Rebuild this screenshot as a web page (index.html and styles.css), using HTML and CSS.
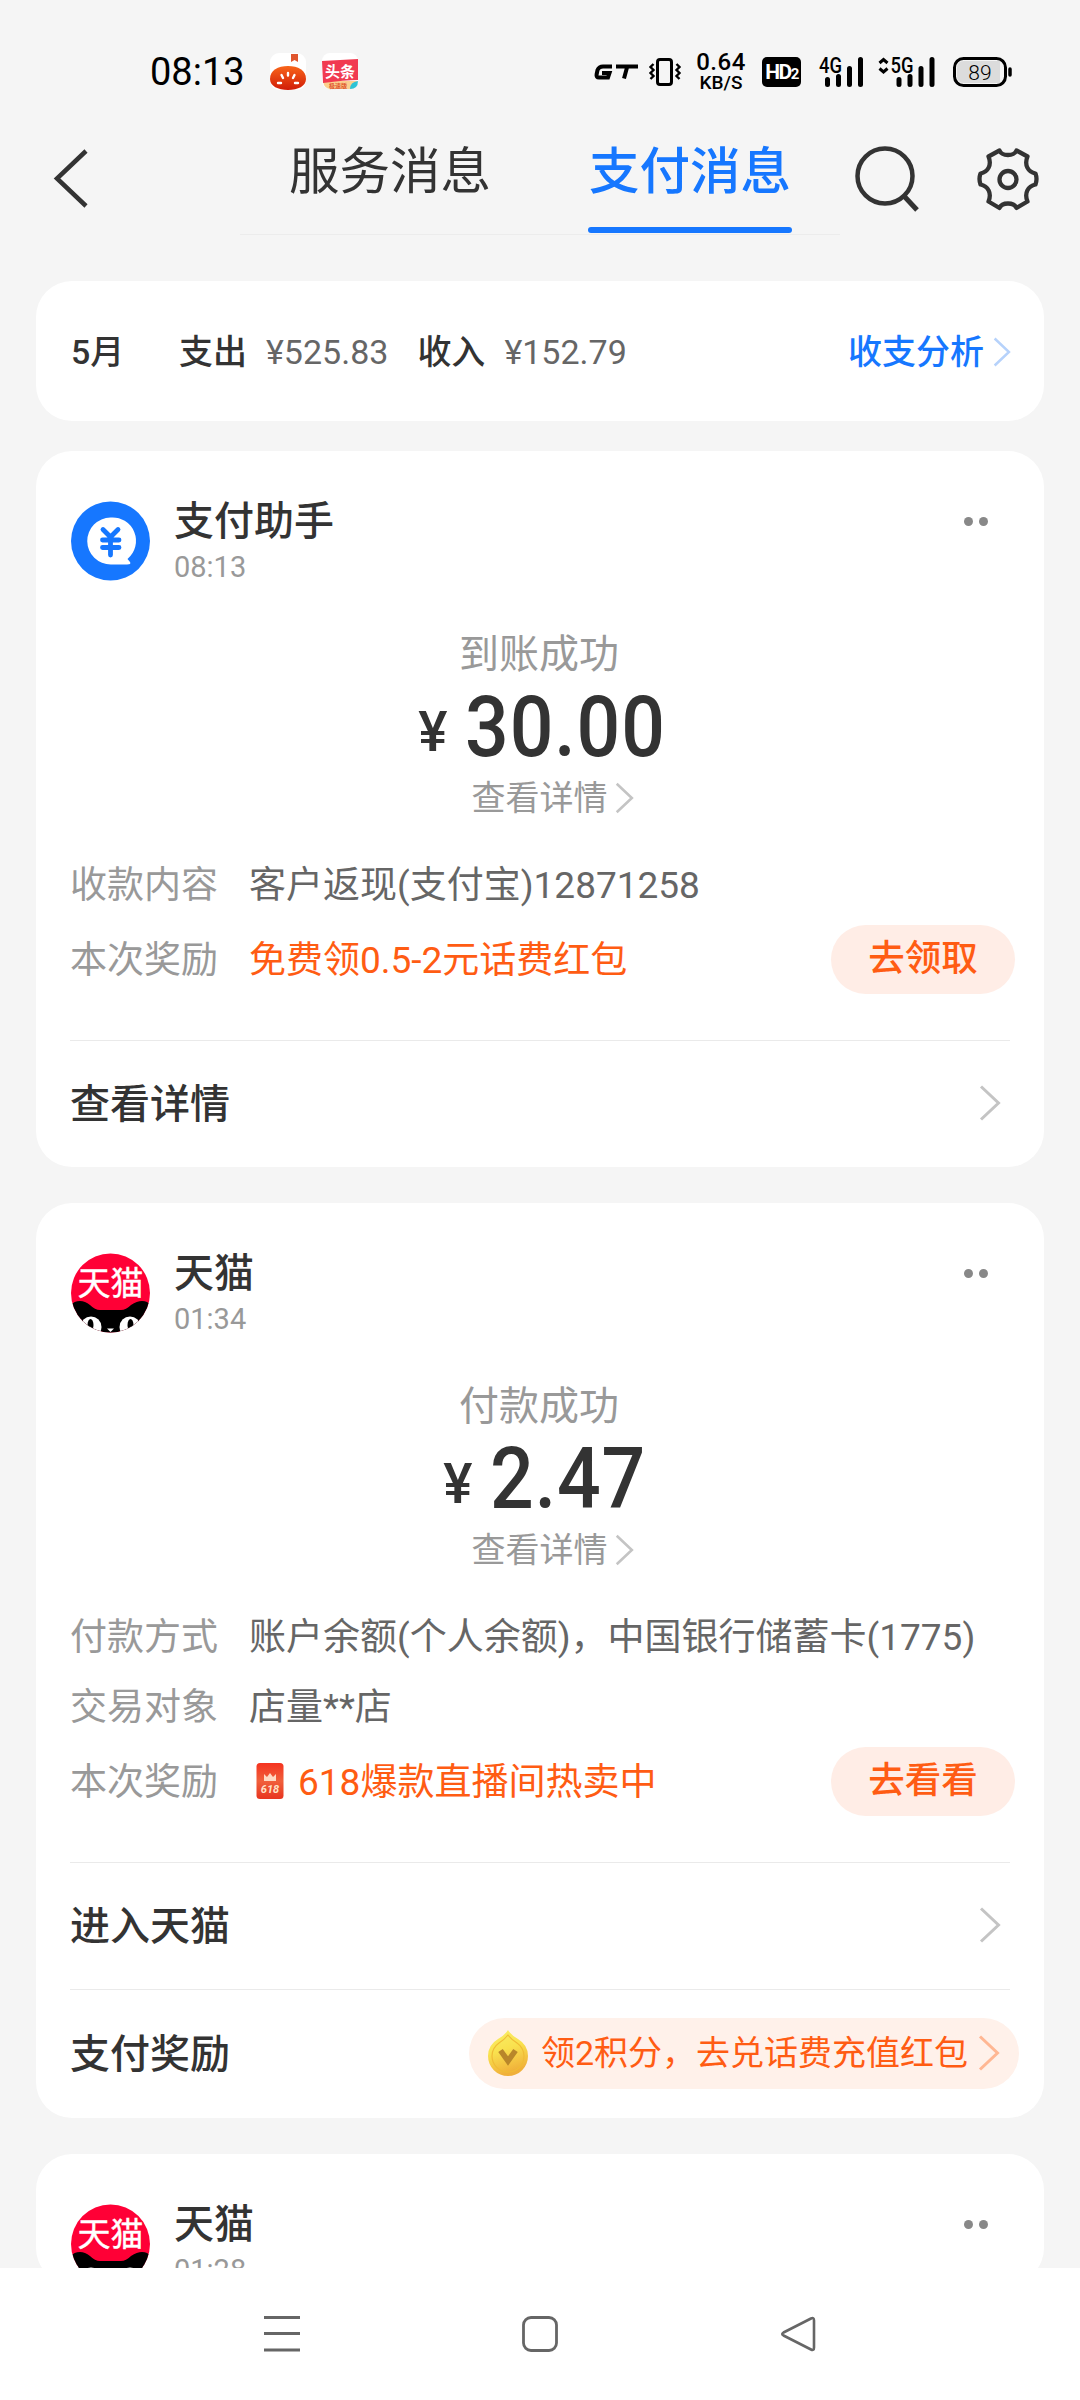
FILE: index.html
```html
<!DOCTYPE html>
<html lang="zh-CN">
<head>
<meta charset="utf-8">
<title>支付消息</title>
<link rel="stylesheet" href="styles.css">
</head>
<body>
<svg width="0" height="0" class="defs">
  <defs>
    <linearGradient id="tomato" x1="0" y1="0" x2="0" y2="1"><stop offset="0" stop-color="#f8651a"/><stop offset="1" stop-color="#d11c08"/></linearGradient>
    <linearGradient id="gold" x1="0" y1="0" x2="0.3" y2="1"><stop offset="0" stop-color="#f9f06a"/><stop offset="0.5" stop-color="#f9e14e"/><stop offset="1" stop-color="#f0b03a"/></linearGradient>
    <linearGradient id="packet" x1="0" y1="0" x2="0" y2="1"><stop offset="0" stop-color="#f5331f"/><stop offset="0.5" stop-color="#f0603c"/><stop offset="1" stop-color="#e8351f"/></linearGradient>
    <clipPath id="round"><circle cx="39.5" cy="40" r="39.5"/></clipPath>
    <symbol id="chevron" viewBox="0 0 22 36"><path d="M2 1.5 19.5 18 2 34.5" fill="none" stroke="currentColor" stroke-width="3"/></symbol>
    <symbol id="tmall" viewBox="0 0 79 80">
      <g clip-path="url(#round)">
        <rect width="79" height="80" fill="#ff0036"/>
        <path d="M0 52Q3 48 9 48Q14 48 19 52Q24 57 29 57H50Q55 57 60 52Q66 48 71 48Q77 48 79 52V80H0Z" fill="#000"/>
        <circle cx="20" cy="74" r="10.500" fill="#fff"/><circle cx="59" cy="74" r="10.500" fill="#fff"/>
        <path d="M0 66 10 66 14 80H0ZM79 66 69 66 65 80H79Z" fill="#fff"/>
        <path d="M0 52V66H10L5 60ZM79 52V66H69L74 60Z" fill="#000"/>
        <ellipse cx="19.500" cy="72" rx="3" ry="6" fill="#000"/><ellipse cx="59.500" cy="72" rx="3" ry="6" fill="#000"/>
        <path d="M36 75.500H43L39.500 79Z" fill="#fff"/>
      </g>
      <text x="39.500" y="41.500" text-anchor="middle" class="tmall-name">天猫</text>
    </symbol>
  </defs>
</svg>

<div class="screen">
  <div class="status">
    <span class="clock">08:13</span>
    <svg class="app-icon" width="38" height="38" viewBox="0 0 38 38">
      <rect x="1" y="0" width="36" height="37" rx="9" fill="#fff"/>
      <path d="M22 1H29V9L25.500 7 22 9Z" fill="#e0552d"/>
      <path d="M1 26C1 17 9 13 19 13S37 17 37 26C37 33 29 37 19 37S1 33 1 26Z" fill="url(#tomato)"/>
      <g stroke="#fff" stroke-width="2.400" stroke-linecap="round"><path d="M19 20V22.500M12.500 22 14 25M25.500 22 24 25M9 30H12M26 30H29"/></g>
    </svg>
    <svg class="app-icon app-icon-news" width="38" height="38" viewBox="0 0 38 38">
      <rect x="1" y="0" width="36" height="36" rx="8" fill="#fff"/>
      <path d="M2 28H36Q35 36 28 36H10Q3 36 2 28Z" fill="#fbcf8e"/>
      <path d="M1 8 37 6V27Q24 27 2 30Z" fill="#f13a50"/>
      <path d="M29 36Q29 29 37 28 37 36 29 36Z" fill="#2cc3d5"/>
      <text x="19" y="24" text-anchor="middle" class="news-name">头条</text>
      <text x="17" y="35" text-anchor="middle" class="news-sub">极速版</text>
    </svg>
    <div class="indicators">
      <svg width="46" height="16" viewBox="0 0 46 16"><path d="M18 2H9Q5 2 3.500 5.500L2.600 10Q2 13 5 13H14L15.500 8.500H8M22 2H44M33 3 30 14" transform="translate(0 .5)" fill="none" stroke="#000" stroke-width="4"/></svg>
      <svg class="vibrate" width="32" height="30" viewBox="0 0 32 30"><rect x="8.500" y="2.500" width="14" height="25" rx="2.500" fill="none" stroke="#000" stroke-width="3"/><path d="M4.500 7 1.500 10 4.500 13 1.500 16 4.500 19 1.500 22M27.500 7 30.500 10 27.500 13 30.500 16 27.500 19 30.500 22" fill="none" stroke="#000" stroke-width="2.400"/></svg>
      <div class="speed"><b>0.64</b><span>KB/S</span></div>
      <div class="hd">HD<small>2</small></div>
      <svg class="signal" width="46" height="32" viewBox="0 0 46 32"><text x="0" y="17" class="net" textLength="23" lengthAdjust="spacingAndGlyphs">4G</text><path d="M8.500 23.500V28.500M19.500 20.500V28.500M30.500 12.500V28.500M41.500 3.500V28.500" stroke="#000" stroke-width="5" stroke-linecap="round"/></svg>
      <svg class="signal5" width="60" height="32" viewBox="0 0 60 32"><path d="M1.500 7 5.500 3.500 9.500 7M1.500 12.500 5.500 16 9.500 12.500" fill="none" stroke="#000" stroke-width="3"/><text x="12.500" y="17" class="net" textLength="23" lengthAdjust="spacingAndGlyphs">5G</text><path d="M21 23.500V28.500M32 20.500V28.500M43 12.500V28.500M54 3.500V28.500" stroke="#000" stroke-width="5" stroke-linecap="round"/></svg>
      <svg class="battery" width="60" height="32" viewBox="0 0 60 32"><rect x="1.500" y="2.500" width="51" height="27" rx="9" fill="#f5f5f5" stroke="#000" stroke-width="3"/><path d="M11 5H47V27H11Q4 27 4 20V12Q4 5 11 5Z" fill="#dcdcdc"/><path d="M57 13V19" stroke="#000" stroke-width="3.500" stroke-linecap="round"/><text x="27" y="23.500" text-anchor="middle" class="charge">89</text></svg>
    </div>
  </div>

  <header class="header">
    <svg class="back" width="36" height="60" viewBox="0 0 36 60"><path d="M33 3 4 30.500 33 58" fill="none" stroke="#333" stroke-width="4.500"/></svg>
    <nav class="tabs">
      <div class="tab">服务消息</div>
      <div class="tab tab-active">支付消息</div>
    </nav>
    <svg class="search" width="66" height="68" viewBox="0 0 66 68"><circle cx="30" cy="32" r="27.500" fill="none" stroke="#333" stroke-width="4.500"/><path d="M49 52 62 66" stroke="#333" stroke-width="5"/></svg>
    <svg class="gear" width="62" height="64" viewBox="0 0 62 64"><path d="M22.500 3.500C25 9.500 37 9.500 39.500 3.500L50.500 9.500C47 18 51 25 58.500 26.500Q60.500 32 58.500 37.500C51 39 47 46 50.500 54.500L39.500 61C37 55 25 55 22.500 61L11.500 54.500C15 46 11 39 3.500 37.500Q1.500 32 3.500 26.500C11 25 15 18 11.500 9.500Z" fill="none" stroke="#333" stroke-width="4.300" stroke-linejoin="round"/><circle cx="31" cy="32.500" r="8.500" fill="none" stroke="#333" stroke-width="4.300"/></svg>
  </header>

  <main class="feed">
    <section class="card summary">
      <b class="month">5月</b><b>支出</b><span class="sum">¥525.83</span><b class="income">收入</b><span class="sum">¥152.79</span>
      <a class="analysis">收支分析<svg width="18" height="30"><use href="#chevron"/></svg></a>
    </section>

    <section class="card message">
      <div class="head">
        <svg class="avatar" width="79" height="80" viewBox="0 0 79 80"><circle cx="39.500" cy="40" r="39.500" fill="#1677ff"/><path d="M39.500 16.500A23.500 23.500 0 1 0 40 63.500H56Q60.500 63.500 59 61L56.500 58A23.500 23.500 0 0 0 39.500 16.500Z" fill="#fff"/><path d="M32 28.500 39.500 36 47 28.500M31.500 39H48M31.500 46.500H48M39.500 36V54" fill="none" stroke="#1677ff" stroke-width="4.800" stroke-linecap="round"/></svg>
        <div class="who"><b>支付助手</b><time>08:13</time></div>
        <div class="dots"><i></i><i></i></div>
      </div>
      <div class="hero">
        <div class="result">到账成功</div>
        <div class="amount"><span class="yen">¥</span><span class="number">30.00</span></div>
        <div class="detail">查看详情<svg width="19" height="32"><use href="#chevron"/></svg></div>
      </div>
      <div class="row"><span class="label">收款内容</span><span>客户返现(支付宝)12871258</span></div>
      <div class="row reward"><span class="label">本次奖励</span><span class="orange">免费领0.5-2元话费红包</span><span class="button">去领取</span></div>
      <div class="action"><b>查看详情</b><svg width="22" height="36"><use href="#chevron"/></svg></div>
    </section>

    <section class="card message">
      <div class="head">
        <svg class="avatar" width="79" height="80"><use href="#tmall"/></svg>
        <div class="who"><b>天猫</b><time>01:34</time></div>
        <div class="dots"><i></i><i></i></div>
      </div>
      <div class="hero">
        <div class="result">付款成功</div>
        <div class="amount"><span class="yen">¥</span><span class="number">2.47</span></div>
        <div class="detail">查看详情<svg width="19" height="32"><use href="#chevron"/></svg></div>
      </div>
      <div class="row"><span class="label">付款方式</span><span>账户余额(个人余额)，中国银行储蓄卡(1775)</span></div>
      <div class="row"><span class="label">交易对象</span><span>店量**店</span></div>
      <div class="row reward"><span class="label">本次奖励</span><svg class="packet" width="28" height="36" viewBox="0 0 28 36"><rect x="0.500" width="27" height="36" rx="3.500" fill="url(#packet)"/><path d="M8 11 11 14 14 10 17 14 20 11V18H8Z" fill="#ffd9c4"/><text x="14" y="30" text-anchor="middle" class="packet-text">618</text></svg><span class="orange">618爆款直播间热卖中</span><span class="button">去看看</span></div>
      <div class="action"><b>进入天猫</b><svg width="22" height="36"><use href="#chevron"/></svg></div>
      <div class="action action-points"><b>支付奖励</b>
        <div class="points"><svg class="coin" width="42" height="48" viewBox="0 0 42 48"><path d="M21 1Q24 6 31 10Q41 16 41 27A20 20 0 0 1 1 27Q1 16 11 10Q18 6 21 1Z" fill="url(#gold)"/><path d="M21 6Q25 11 30 14Q37 19 37 27A16 16 0 0 1 5 27Q5 19 12 14Q17 11 21 6Z" fill="none" stroke="#f0bc35" stroke-width="1.200"/><path d="M13.500 21.500 21 32 28.500 21.500" fill="none" stroke="#b8862a" stroke-width="5.500"/></svg><span>领2积分，去兑话费充值红包</span><svg class="points-arrow" width="22" height="36"><use href="#chevron"/></svg></div>
      </div>
    </section>

    <section class="card message">
      <div class="head">
        <svg class="avatar" width="79" height="80"><use href="#tmall"/></svg>
        <div class="who"><b>天猫</b><time>01:28</time></div>
        <div class="dots"><i></i><i></i></div>
      </div>
    </section>
  </main>

  <footer class="navbar">
    <svg width="36" height="38" viewBox="0 0 36 38"><path d="M0 2.500H36M0 18.500H36M0 35H36" stroke="#666" stroke-width="3"/></svg>
    <svg width="38" height="38" viewBox="0 0 38 38"><rect x="2.500" y="2.500" width="33" height="33" rx="7.500" fill="none" stroke="#666" stroke-width="2.800"/></svg>
    <svg width="36" height="38" viewBox="0 0 36 38"><path d="M31 3.500Q34 2 34 5.500V32.500Q34 36 31 34.500L3.500 20.500Q1 19 3.500 17.500Z" fill="none" stroke="#666" stroke-width="2.600" stroke-linejoin="round"/></svg>
  </footer>
</div>
</body>
</html>
```
FILE: styles.css
```css
* { box-sizing: border-box; }
body { margin: 0; font-family: Roboto, "Noto Sans CJK SC", sans-serif; line-height: 1.2; color: #333; background: #f5f5f5; }
svg { display: block; flex: none; overflow: visible; }
b { font-weight: 500; }
.defs { position: absolute; }
.screen { width: 1080px; height: 2400px; display: flex; flex-direction: column; overflow: hidden; background: #f5f5f5; }

.status { height: 130px; flex: none; display: flex; align-items: center; padding: 14px 67px 0 150px; color: #000; }
.clock { width: 119px; font-size: 38px; line-height: 44px; }
.app-icon-news { margin-left: 14px; }
.indicators { display: flex; align-items: center; margin-left: auto; }
.vibrate { margin-left: 9px; }
.speed { display: flex; flex-direction: column; align-items: center; width: 52px; margin-left: 14px; }
.speed b { font-size: 24px; line-height: 22px; letter-spacing: .5px; }
.speed span { font-size: 19px; line-height: 20px; font-weight: 500; }
.hd { display: flex; align-items: baseline; justify-content: center; width: 39px; height: 30px; margin-left: 15px; border-radius: 5px; background: #000; color: #fff; font-size: 21px; line-height: 31px; font-weight: 700; letter-spacing: -1.500px; }
.hd small { font-size: 15px; }
.signal { margin-left: 18px; }
.signal5 { margin-left: 13px; }
.battery { margin-left: 15px; }
.net { font: 500 22px Roboto, sans-serif; }
.charge { font: 300 21px Roboto, sans-serif; }
.news-name { font: 700 15px "Noto Sans CJK SC", sans-serif; fill: #fff; }
.news-sub { font: 700 6px "Noto Sans CJK SC", sans-serif; fill: #e0552d; }
.tmall-name { font: 400 33px "Noto Sans CJK SC", sans-serif; fill: #fff; stroke: #fff; stroke-width: .4px; }
.packet-text { font: italic 700 11px Roboto, sans-serif; fill: #ffe3c8; }

.header { height: 151px; flex: none; display: flex; align-items: flex-start; padding-left: 53px; }
.back { margin-top: 18px; }
.tabs { display: flex; justify-content: space-between; width: 600px; height: 105px; margin-left: 151px; padding: 0 48px; border-bottom: 1px solid #ececec; }
.tab { width: 204px; height: 103px; font-size: 50.500px; line-height: 83px; text-align: center; white-space: nowrap; }
.tab-active { color: #1677ff; font-weight: 500; }
.tab-active::after { content: ""; display: block; height: 6px; margin-top: 14px; border-radius: 3px; background: #1677ff; }
.search { margin: 14px 0 0 15px; }
.gear { margin: 17px 0 0 56px; }

.feed { flex: 1; min-height: 0; overflow: hidden; padding: 0 36px; display: flex; flex-direction: column; gap: 36px; }
.card { flex: none; border-radius: 36px; background: #fff; }
.summary { display: flex; align-items: center; height: 140px; margin-bottom: -6px; padding: 2px 33px 0 35px; font-size: 34px; line-height: 50px; }
.month { width: 108px; }
.sum { margin-left: 19px; color: #666; }
.income { margin-left: 29px; }
.analysis { display: flex; align-items: center; gap: 9px; margin-left: auto; font-weight: 500; color: #1677ff; }
.analysis svg { color: #b6d2fb; }
.message { padding: 0 35px; }
.head { display: flex; height: 130px; padding-top: 50px; }
.who { margin-left: 24px; }
.who b { display: block; margin-top: 1px; font-size: 40px; line-height: 40px; }
.who time { display: block; margin-top: 8px; font-size: 29px; line-height: 34px; color: #999; }
.dots { display: flex; gap: 6px; margin: 16px 21px 0 auto; }
.dots i { width: 9px; height: 9px; border-radius: 50%; background: #888; }
.hero { display: flex; flex-direction: column; align-items: center; padding-top: 49px; margin-bottom: 38px; color: #999; }
.result { margin-right: 2px; font-size: 40px; line-height: 50px; }
.amount { display: flex; height: 92px; line-height: 94px; font-size: 86px; font-weight: 500; color: #333; }
.yen { margin-right: 18px; font-size: 55px; line-height: 104px; }
.number { margin-right: -28px; letter-spacing: 1px; transform: scaleX(.895); transform-origin: left; }
.detail { display: flex; align-items: center; gap: 7px; margin-left: 25px; font-size: 34px; line-height: 52px; }
.detail svg { color: #c4c4c4; }
.row { display: flex; align-items: center; height: 46px; padding-top: 2px; margin-left: -1px; font-size: 37px; color: #666; white-space: nowrap; }
.row + .row { margin-top: 24px; }
.label { width: 179px; color: #999; }
.row + .reward { height: 69px; margin: 17px 0 46px -1px; padding-top: 3px; }
.orange { color: #ff5c13; }
.packet { margin: -4px 14px 0 7px; }
.button { width: 184px; height: 69px; margin: -4px -6px 0 auto; border-radius: 35px; background: #ffede6; color: #ff5c13; font-size: 36.500px; font-weight: 500; line-height: 67px; text-align: center; }
.action { display: flex; align-items: center; justify-content: space-between; height: 127px; border-top: 1px solid #eaeaea; padding-right: 9px; margin: 0 -1px; font-size: 40px; }
.action b { padding-top: 2px; }
.action-points { height: 129px; }
.action > svg { margin-top: -2px; color: #c4c4c4; }
.points { display: flex; align-items: center; height: 71px; width: 550px; margin: -2px -18px 0 0; padding-left: 18px; border-radius: 36px; background: #fff1ea; color: #ff5c13; font-size: 34px; white-space: nowrap; }
.coin { margin-right: 12px; }
.points-arrow { margin-left: 10px; color: #ffb793; }

.navbar { flex: none; display: flex; justify-content: space-between; align-items: flex-start; height: 132px; padding: 47px 264px 0; background: #fff; }
```
